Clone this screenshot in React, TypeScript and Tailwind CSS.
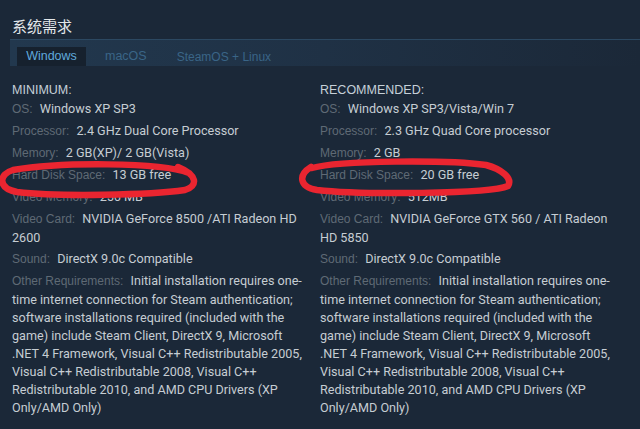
import React from "react";

const VAL = "font-['Roboto','Liberation_Sans',sans-serif]";

function Row({ label, children }: { label: string; children: React.ReactNode }) {
  return (
    <li className="mb-[2px]">
      <span className="inline-block leading-[20px] text-[#5f6a75] text-[12px] font-['Liberation_Sans',sans-serif] mr-[4px]">{label}:</span>{" "}
      {children}
    </li>
  );
}

const OTHER =
  "Initial installation requires one-time internet connection for Steam authentication; software installations required (included with the game) include Steam Client, DirectX 9, Microsoft .NET 4 Framework, Visual C++ Redistributable 2005, Visual C++ Redistributable 2008, Visual C++ Redistributable 2010, and AMD CPU Drivers (XP Only/AMD Only)";

function Column({
  title,
  rows,
}: {
  title: string;
  rows: [string, string][];
}) {
  return (
    <div className={`pl-[2px] ${VAL} text-[12.6px] leading-[18px] text-[#c6cdd3]`}>
      <div className="text-[#c6d0d8] font-['Liberation_Sans',sans-serif] text-[12.5px]">{title}</div>
      <ul>
        {rows.map(([k, v]) => (
          <Row key={k} label={k}>
            {v}
          </Row>
        ))}
      </ul>
    </div>
  );
}

export default function App() {
  return (
    <div className="relative w-[640px] h-[429px] overflow-hidden bg-[#1b2838]">
      <div className="pl-[10px] pt-[16px]">
        <h2 className="pl-[2px] text-[15px] leading-[20px] text-[#e3e7ea] font-['Noto_Sans_CJK_SC',sans-serif]">
          系统需求
        </h2>
        <div className="mt-[3px] h-[27px] border-t border-[#2c4861] bg-gradient-to-r from-[#22384e] via-[#1f3145] to-[#1b2838] flex items-end pl-[7px]">
          <div className="h-[19px] w-[69px] bg-[#16212e] flex items-center justify-center text-[#5fa9dc] text-[12.5px] font-['Liberation_Sans',sans-serif]">
            Windows
          </div>
          <div className="h-[19px] flex items-center ml-[19px] text-[#3a6587] text-[12.5px] font-['Liberation_Sans',sans-serif]">
            macOS
          </div>
          <div className="h-[19px] flex items-center ml-[30px] text-[#3a6587] text-[12px] font-['Liberation_Sans',sans-serif]">
            SteamOS + Linux
          </div>
        </div>
        <div className="mt-[15px] grid grid-cols-[298px_298px] gap-x-[10px]">
          <Column
            title="MINIMUM:"
            rows={[
              ["OS", "Windows XP SP3"],
              ["Processor", "2.4 GHz Dual Core Processor"],
              ["Memory", "2 GB(XP)/ 2 GB(Vista)"],
              ["Hard Disk Space", "13 GB free"],
              ["Video Memory", "256 MB"],
              ["Video Card", "NVIDIA GeForce 8500 /ATI Radeon HD 2600"],
              ["Sound", "DirectX 9.0c Compatible"],
              ["Other Requirements", OTHER],
            ]}
          />
          <Column
            title="RECOMMENDED:"
            rows={[
              ["OS", "Windows XP SP3/Vista/Win 7"],
              ["Processor", "2.3 GHz Quad Core processor"],
              ["Memory", "2 GB"],
              ["Hard Disk Space", "20 GB free"],
              ["Video Memory", "512MB"],
              ["Video Card", "NVIDIA GeForce GTX 560 / ATI Radeon HD 5850"],
              ["Sound", "DirectX 9.0c Compatible"],
              ["Other Requirements", OTHER],
            ]}
          />
        </div>
      </div>
      <svg
        className="absolute inset-0 pointer-events-none"
        width="640"
        height="429"
        viewBox="0 0 640 429"
        fill="none"
      >
        <path
          d="M189 173 C160 162 60 162 13 170 C-1 174 -3 188 17 192 C60 197 150 195 185 190 C198 186 198 175 178 167"
          stroke="#ea2530"
          strokeWidth="6.5"
          strokeLinecap="round"
          strokeLinejoin="round"
        />
        <path
          d="M312 168 C340 160 450 160 486 165 C501 169 513 178 508 186 C490 194 360 195 317 190 C299 187 298 175 311 167"
          stroke="#ea2530"
          strokeWidth="6.5"
          strokeLinecap="round"
          strokeLinejoin="round"
        />
      </svg>
    </div>
  );
}
